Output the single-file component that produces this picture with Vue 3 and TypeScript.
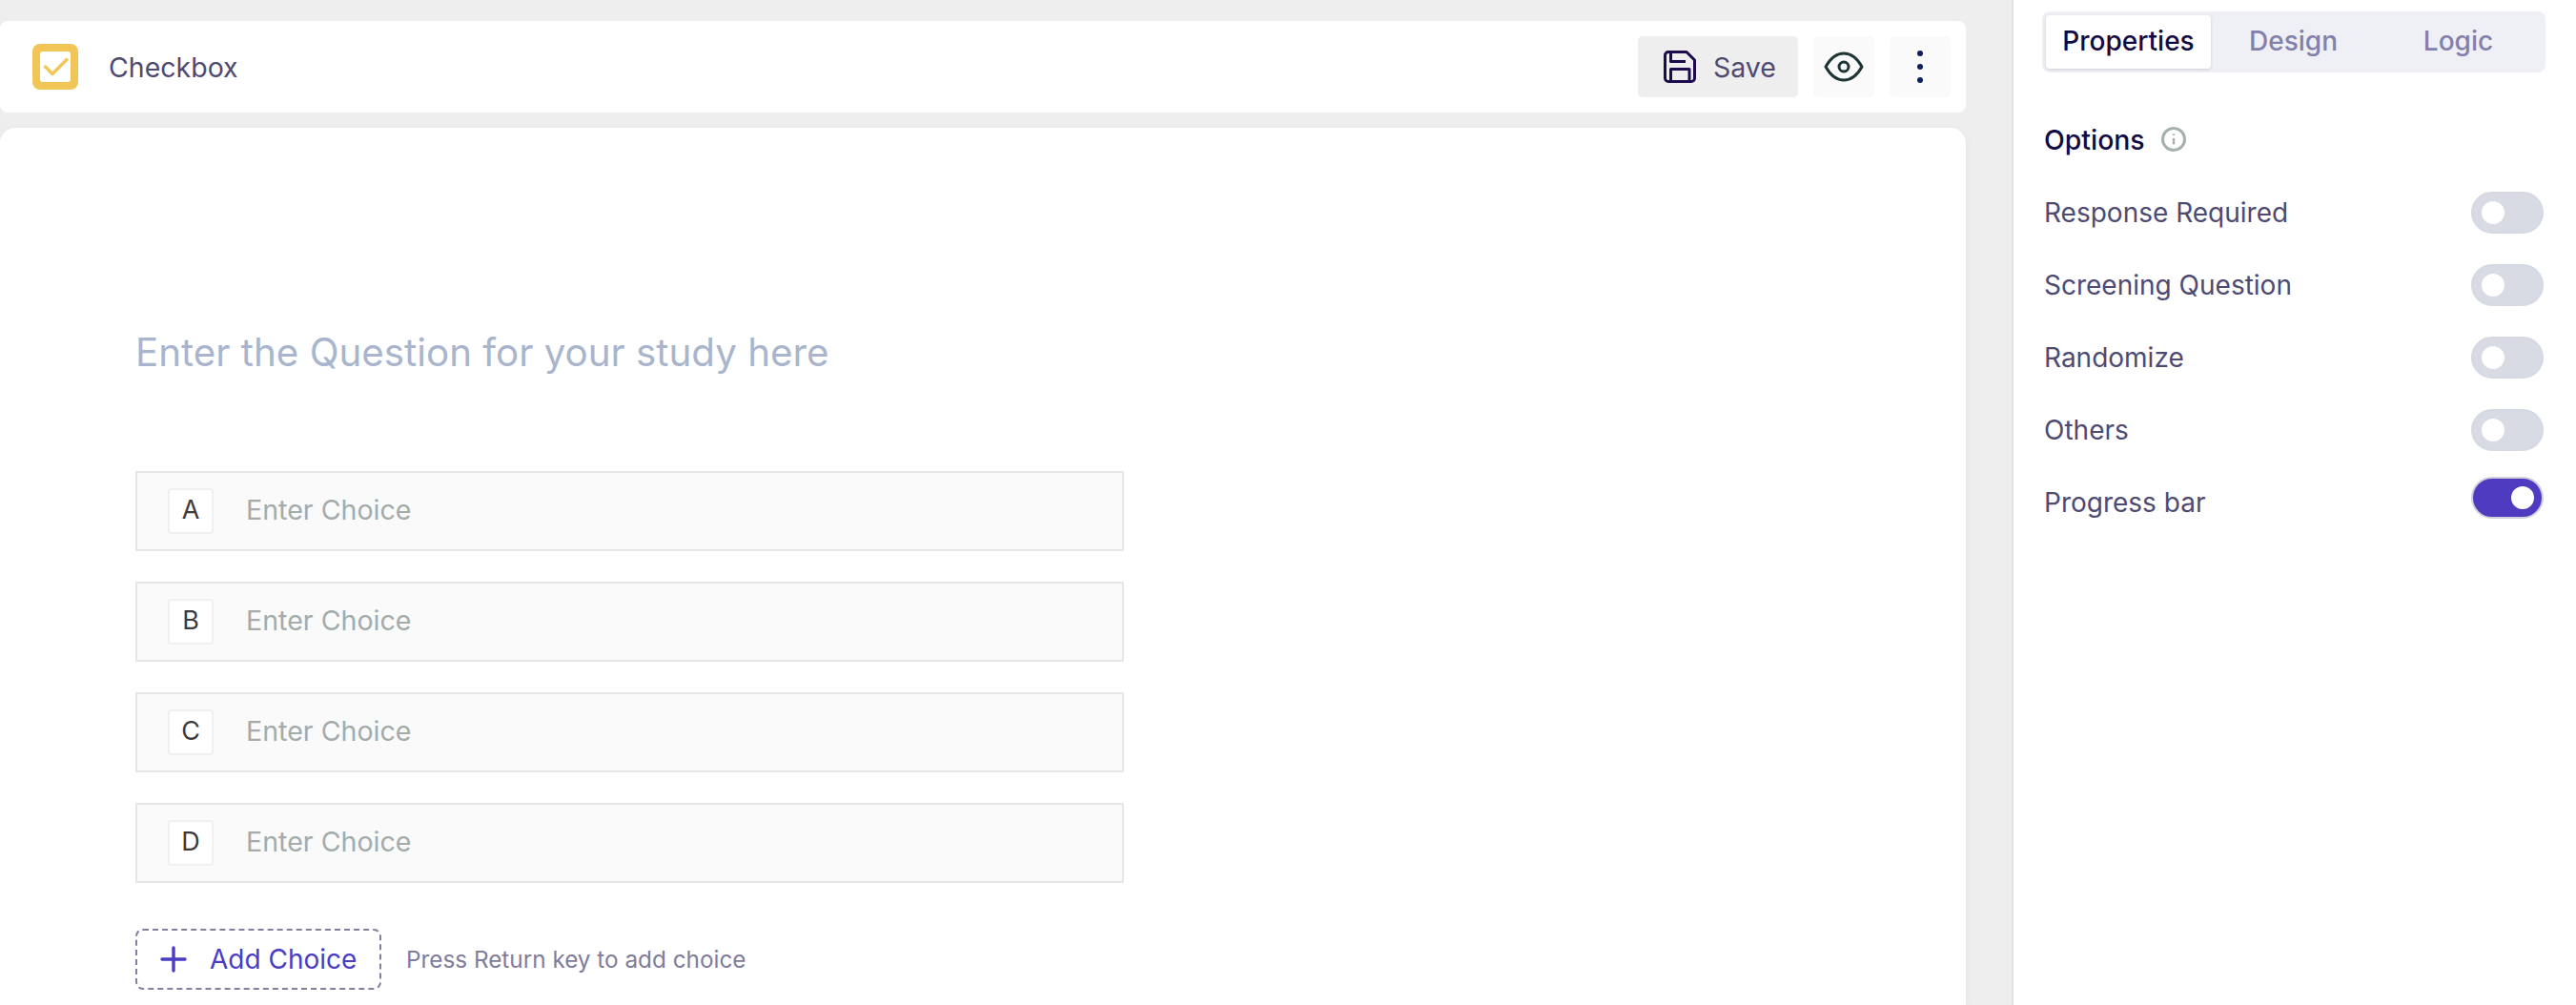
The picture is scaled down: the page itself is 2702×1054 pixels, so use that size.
<script setup lang="ts">
const choices: string[] = ['A', 'B', 'C', 'D']
const options: { label: string; on: boolean }[] = [
  { label: 'Response Required', on: false },
  { label: 'Screening Question', on: false },
  { label: 'Randomize', on: false },
  { label: 'Others', on: false },
  { label: 'Progress bar', on: true },
]
</script>

<template>
  <div class="page">
    <div class="main">
      <header class="bar">
        <div class="type-icon"><svg width="32" height="32" viewBox="0 0 32 32"><rect width="32" height="32" rx="3" fill="#fff"/><path d="M5.500 16l7.500 7.500L28 8.500" fill="none" stroke="#f2c557" stroke-width="3.400" stroke-linecap="round" stroke-linejoin="round"/></svg></div>
        <span class="type-name">Checkbox</span>
        <div class="actions">
          <button class="save">
            <svg width="34" height="34" viewBox="0 0 34 34" fill="none" stroke="#1d0b4e" stroke-width="3" stroke-linejoin="round"><path d="M4 1.500H24L32.500 10V29a3.500 3.500 0 0 1-3.500 3.500H5A3.500 3.500 0 0 1 1.500 29V5A3.500 3.500 0 0 1 5 1.500Z"/><path d="M7.500 2v9.500H23"/><path d="M7.500 32V19.500H27V32"/></svg>
            <span>Save</span>
          </button>
          <button class="square">
            <svg width="42" height="32" viewBox="0 0 42 32" fill="none" stroke="#1e3535" stroke-width="3"><path d="M2 16C7 7 13.500 2 21 2s14 5 19 14c-5 9-11.500 14-19 14S7 25 2 16Z" stroke-linejoin="round"/><circle cx="21" cy="16" r="5"/></svg>
          </button>
          <button class="square dots"><i></i><i></i><i></i></button>
        </div>
      </header>
      <section class="canvas">
        <div class="question">Enter the Question for your study here</div>
        <div class="choices">
          <div v-for="c in choices" :key="c" class="choice">
            <span class="letter">{{ c }}</span>
            <span class="choice-text">Enter Choice</span>
          </div>
        </div>
        <div class="add-row">
          <button class="add">
            <svg width="28" height="28" viewBox="0 0 28 28" stroke="#4b3cc4" stroke-width="3.400" stroke-linecap="round"><path d="M14 2v24M2 14h24"/></svg>
            <span>Add Choice</span>
          </button>
          <span class="hint">Press Return key to add choice</span>
        </div>
      </section>
    </div>
    <aside class="panel">
      <div class="tabs">
        <div class="tab active">Properties</div>
        <div class="tab">Design</div>
        <div class="tab">Logic</div>
      </div>
      <div class="options-head">
        <span>Options</span>
        <svg width="26" height="26" viewBox="0 0 26 26" fill="none" stroke="#a6b0ae"><circle cx="13" cy="13" r="11.500" stroke-width="3"/><path d="M13 12v6.500M13 7.500v1.600" stroke-width="2.400"/></svg>
      </div>
      <div v-for="o in options" :key="o.label" class="opt">
        <span>{{ o.label }}</span>
        <span class="toggle" :class="{ on: o.on }"><i></i></span>
      </div>
    </aside>
  </div>
</template>

<style>
html, body { margin: 0; background: #eeeeee; }
</style>

<style scoped>
* { box-sizing: border-box; }
.page {
  display: flex;
  width: 2702px;
  height: 1054px;
  overflow: hidden;
  background: #eeeeee;
  font-family: Inter, "Liberation Sans", sans-serif;
}
.main {
  width: 2062px;
  flex: none;
  padding-top: 22px;
  display: flex;
  flex-direction: column;
  gap: 16px;
}
.bar {
  height: 96px;
  flex: none;
  background: #fff;
  border-radius: 8px;
  display: flex;
  align-items: center;
  padding: 0 16px 0 34px;
}
.type-icon {
  width: 48px;
  height: 48px;
  background: #f2c557;
  border-radius: 8px;
  display: flex;
  align-items: center;
  justify-content: center;
}
.type-name {
  margin-left: 32px;
  font-size: 28.500px;
  color: #4e4a72;
}
.actions {
  margin-left: auto;
  display: flex;
  gap: 16px;
}
button {
  border: 0;
  font-family: inherit;
  padding: 0;
}
.save {
  width: 168px;
  height: 64px;
  background: #eeeeee;
  border-radius: 5px;
  display: flex;
  align-items: center;
  padding-left: 27px;
  gap: 18px;
  font-size: 28.500px;
  color: #4e4a72;
}
.square {
  width: 64px;
  height: 64px;
  background: #fafafa;
  border-radius: 5px;
  display: flex;
  align-items: center;
  justify-content: center;
}
.dots {
  flex-direction: column;
  gap: 8px;
}
.dots i {
  width: 6px;
  height: 6px;
  border-radius: 50%;
  background: #0c2060;
}
.canvas {
  flex: 1;
  background: #fff;
  border-radius: 16px 16px 0 0;
  box-shadow: 0 2px 8px rgba(0, 0, 0, 0.05);
  padding: 0 0 0 142px;
}
.question {
  margin-top: 212px;
  height: 48px;
  line-height: 48px;
  font-size: 40.300px;
  color: #a9b5cc;
}
.choices {
  margin-top: 100px;
  display: flex;
  flex-direction: column;
  gap: 32px;
}
.choice {
  width: 1037px;
  height: 84px;
  background: #fafafa;
  border: 2px solid #e6e6e6;
  display: flex;
  align-items: center;
  padding-left: 32px;
}
.letter {
  width: 48px;
  height: 48px;
  background: #fff;
  border: 2px solid #f0f0f0;
  border-radius: 3px;
  display: flex;
  align-items: center;
  justify-content: center;
  padding-bottom: 3px;
  font-size: 27px;
  color: #3b3b3b;
}
.choice-text {
  margin-left: 34px;
  padding-bottom: 3px;
  font-size: 28.600px;
  color: #a3abab;
}
.add-row {
  margin-top: 48px;
  display: flex;
  align-items: center;
}
.add {
  width: 258px;
  height: 64px;
  background: #fff;
  border: 2px dashed #83809f;
  border-radius: 8px;
  display: flex;
  align-items: center;
  padding-left: 24px;
  gap: 24px;
  font-size: 28px;
  color: #4b3cc4;
}
.hint {
  margin-left: 26px;
  font-size: 24.300px;
  color: #7f7c9c;
}
.panel {
  margin-left: 48px;
  flex: 1;
  background: #fff;
  border-left: 2px solid #e2e2e2;
  padding: 12px 31px 0 30px;
  display: flex;
  flex-direction: column;
}
.tabs {
  width: 528px;
  height: 64px;
  background: #eff0f5;
  border-radius: 8px;
  padding: 4px;
  display: grid;
  grid-template-columns: repeat(3, 173px);
}
.tab {
  display: flex;
  align-items: center;
  justify-content: center;
  padding-bottom: 3px;
  font-size: 28px;
  font-weight: 500;
  color: #8280ac;
  border-radius: 4px;
}
.tab.active {
  background: #fff;
  color: #120b42;
  box-shadow: 0 1px 3px rgba(20, 20, 60, 0.15);
}
.options-head {
  margin: 50px 0 19px 2px;
  height: 40px;
  display: flex;
  align-items: center;
  gap: 17px;
  font-size: 28.400px;
  font-weight: 500;
  color: #120b42;
}
.opt {
  margin: 0 3px 0 2px;
  height: 76px;
  flex: none;
  display: flex;
  align-items: center;
  justify-content: space-between;
  font-size: 28px;
  color: #4e4a72;
}
.toggle {
  width: 76px;
  height: 44px;
  border-radius: 22px;
  background: #d8dae4;
  border: 2px solid #d6d8e2;
  display: flex;
  align-items: center;
  padding-left: 9px;
}
.toggle i {
  width: 24px;
  height: 24px;
  border-radius: 50%;
  background: #fff;
}
.toggle.on {
  background: #4f3bc0;
  border-color: #cfcfd8;
  justify-content: flex-end;
  padding: 0 8px 0 0;
  margin-bottom: 10px;
}
</style>
